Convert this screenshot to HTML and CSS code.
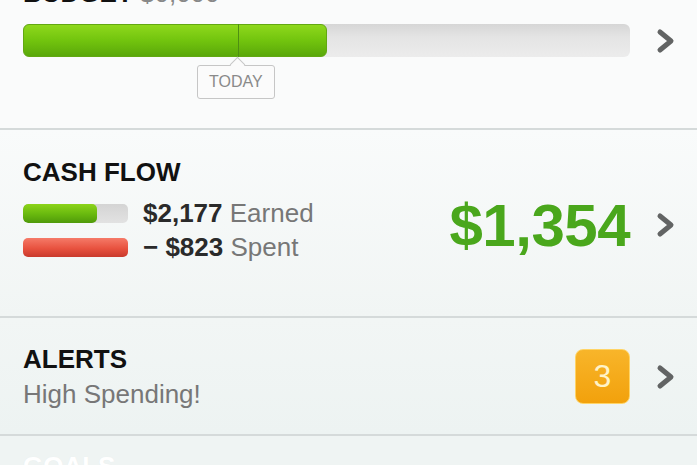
FILE: index.html
```html
<!DOCTYPE html>
<html lang="en">
<head>
  <meta charset="UTF-8" />
  <meta name="viewport" content="width=device-width, initial-scale=1.0" />
  <title>Overview</title>
  <link rel="stylesheet" href="styles.css">
</head>
<body>
  <div class="screen">
    <section class="section budget">
      <h2 class="title">BUDGET <span class="muted">$0,000</span></h2>
      <div class="bar-row">
        <div class="track">
          <div class="fill" style="width:50.1%"></div>
          <div class="today" style="left:35.4%">
            <span class="today-label">TODAY</span>
          </div>
        </div>
        <svg class="chev" viewBox="0 0 20 26" width="20" height="26"><polyline points="4,4 15,13 4,22" /></svg>
      </div>
    </section>

    <section class="section row cashflow">
      <div class="main">
        <h2 class="title">CASH FLOW</h2>
        <div class="flow">
          <div class="flow-line">
            <div class="mini"><div class="mini-fill" style="width:70%"></div></div>
            <p><b>$2,177</b> Earned</p>
          </div>
          <div class="flow-line">
            <div class="mini spent"></div>
            <p><b>&minus; $823</b> Spent</p>
          </div>
        </div>
      </div>
      <div class="amount">$1,354</div>
      <svg class="chev" viewBox="0 0 20 26" width="20" height="26"><polyline points="4,4 15,13 4,22" /></svg>
    </section>

    <section class="section row alerts">
      <div class="main">
        <h2 class="title">ALERTS</h2>
        <p class="note">High Spending!</p>
      </div>
      <div class="badge">3</div>
      <svg class="chev" viewBox="0 0 20 26" width="20" height="26"><polyline points="4,4 15,13 4,22" /></svg>
    </section>

    <section class="section goals">
      <h2 class="title">GOALS</h2>
    </section>
  </div>
</body>
</html>
```

FILE: styles.css
```css
body {
  font-family: "Liberation Sans", Arial, sans-serif;
  margin: 0;
  padding: 0;
  background-color: #f2f6f5;
  overflow: hidden;
}
.screen {
  width: 697px;
  height: 465px;
  overflow: hidden;
}
.section {
  padding: 0 21px 0 23px;
  background: linear-gradient(#f9fbfb, #f1f5f4);
  border-bottom: 2px solid #d5dada;
}
.row {
  display: flex;
  align-items: center;
}
.main {
  flex: 1;
}
.title {
  margin: 0;
  font-size: 26px;
  line-height: 28px;
  font-weight: bold;
  color: #111;
}
.muted {
  color: #888;
  font-weight: normal;
}
.chev {
  flex: none;
  margin-left: 26px;
}
.chev polyline {
  fill: none;
  stroke: #626464;
  stroke-width: 5;
  stroke-linecap: round;
  stroke-linejoin: round;
}

/* budget */
.budget {
  padding-bottom: 71px;
  background: #fafbfb;
}
.budget .title {
  margin-top: -21px;
}
.bar-row {
  display: flex;
  align-items: center;
  margin-top: 17px;
}
.track {
  position: relative;
  flex: 1;
  height: 33px;
  border-radius: 6px;
  background: linear-gradient(#d6d6d6, #e4e4e4 40%, #ececec);
}
.fill {
  height: 100%;
  border-radius: 6px;
  box-sizing: border-box;
  border: 1px solid #62a812;
  background: linear-gradient(#8ed81c, #72c40e 50%, #5aa80a);
}
.today {
  position: absolute;
  top: 0;
  width: 1px;
  height: 33px;
  background: #4e8f12;
}
.today-label {
  position: absolute;
  top: 41px;
  left: -41px;
  width: 76px;
  height: 32px;
  line-height: 32px;
  text-align: center;
  font-size: 16px;
  color: #8a8a8a;
  background: #fbfbfb;
  border: 1px solid #c6c6c6;
  border-radius: 3px;
}
.today-label::before {
  content: "";
  position: absolute;
  top: -7px;
  left: 34px;
  width: 10px;
  height: 10px;
  background: #fbfbfb;
  border-left: 1px solid #c6c6c6;
  border-top: 1px solid #c6c6c6;
  transform: rotate(45deg);
}

/* cash flow */
.cashflow {
  padding-top: 28px;
  padding-bottom: 52px;
}
.cashflow .chev {
  margin-top: 28px;
}
.flow {
  margin-top: 10px;
}
.flow-line {
  display: flex;
  align-items: center;
  height: 34px;
  gap: 15px;
}
.flow-line p {
  margin: 0;
  font-size: 26px;
  color: #777;
}
.flow-line b {
  color: #2a2a2a;
}
.mini {
  width: 105px;
  height: 19px;
  border-radius: 5px;
  background: linear-gradient(#d4d4d4, #e2e2e2);
  overflow: hidden;
}
.mini-fill {
  height: 100%;
  border-radius: 5px;
  background: linear-gradient(#8cd41a, #68b80e 55%, #4f9a0a);
}
.mini.spent {
  background: linear-gradient(#f57a68, #e8523f 55%, #c93a2c);
}
.amount {
  margin-top: 28px;
  font-size: 60px;
  font-weight: bold;
  color: #4aa71c;
  letter-spacing: -0.5px;
}

/* alerts */
.alerts {
  padding-top: 27px;
  padding-bottom: 26px;
  background: linear-gradient(#f2f6f5, #edf3f2);
}
.note {
  margin: 7px 0 0;
  font-size: 26px;
  line-height: 28px;
  color: #777;
}
.badge {
  width: 55px;
  height: 55px;
  box-sizing: border-box;
  border: 1px solid #ffd466;
  border-radius: 8px;
  background: linear-gradient(#f8b52a, #f2a10c);
  color: #fff3c8;
  font-size: 32px;
  line-height: 53px;
  text-align: center;
}

/* goals */
.goals {
  padding-top: 16px;
  border-bottom: none;
  background: #eff4f3;
}
.goals .title {
  color: #ffffff;
  text-shadow: 0 0 1px #e6eceb;
}
```
